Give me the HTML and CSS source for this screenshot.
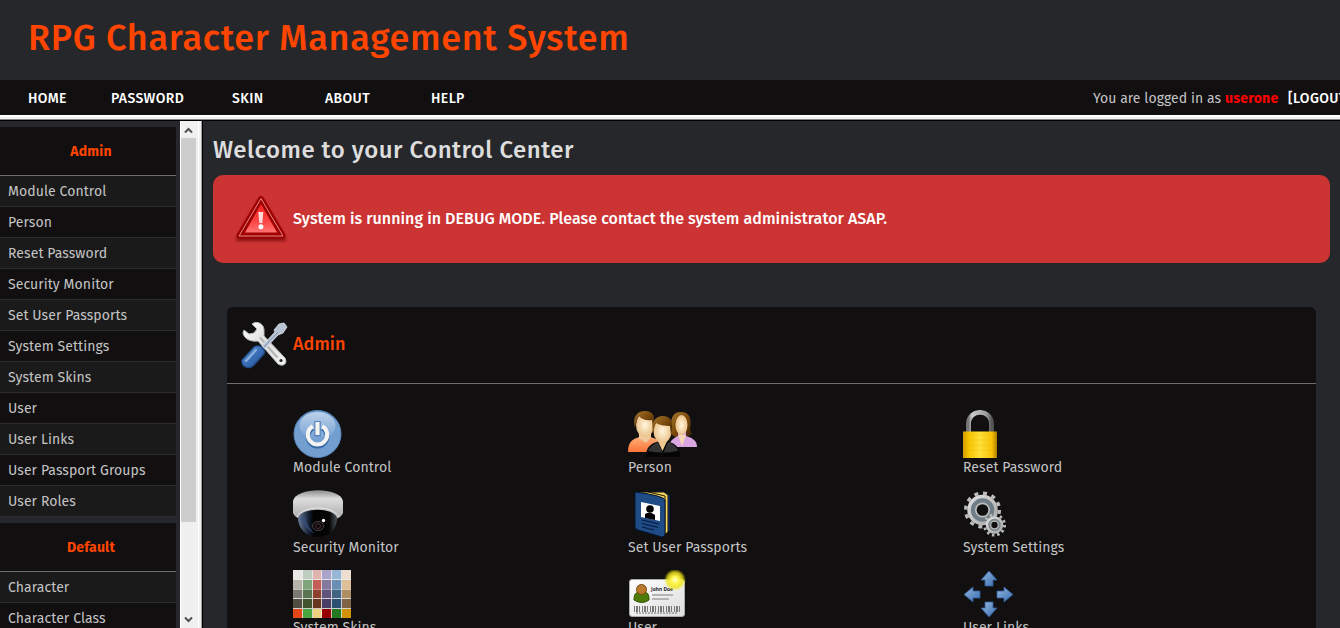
FILE: index.html
```html
<!DOCTYPE html>
<html lang="en">
<head>
<meta charset="utf-8">
<title>RPG Character Management System</title>
<link rel="stylesheet" href="styles.css">
</head>
<body>
<header class="banner"><h1>RPG Character Management System</h1></header>
<nav class="topnav">
  <a class="home">HOME</a><a class="password">PASSWORD</a><a class="skin">SKIN</a><a class="about">ABOUT</a><a class="help">HELP</a>
  <div class="login"><span class="status">You are logged in as</span><b>userone</b><a class="logout">[LOGOUT]</a></div>
</nav>
<div class="frame-bar"></div>
<div class="frames">
  <aside class="sidebar">
    <section class="menu">
      <h2>Admin</h2>
      <ul><li>Module Control</li><li>Person</li><li>Reset Password</li><li>Security Monitor</li><li>Set User Passports</li><li>System Settings</li><li>System Skins</li><li>User</li><li>User Links</li><li>User Passport Groups</li><li>User Roles</li></ul>
    </section>
    <section class="menu">
      <h2>Default</h2>
      <ul><li>Character</li><li>Character Class</li></ul>
    </section>
  </aside>
  <div class="scrollbar">
    <svg width="17" height="17" viewBox="0 0 17 17"><path d="M4 11.500 7.500 8 11 11.500" fill="none" stroke="#505050" stroke-width="2"/></svg>
    <div class="thumb"></div>
    <svg class="down" width="17" height="17" viewBox="0 0 17 17"><path d="M4 6.500 7.500 10 11 6.500" fill="none" stroke="#505050" stroke-width="2"/></svg>
  </div>
  <div class="frame-divider"></div>
  <main>
    <h2 class="welcome">Welcome to your Control Center</h2>
    <div class="alert">
      <svg width="60" height="56" viewBox="0 0 60 56">
        <defs><linearGradient id="warn" x2="0" y2="1"><stop offset="0" stop-color="#f32020"/><stop offset=".6" stop-color="#fa4545"/><stop offset="1" stop-color="#ff7373"/></linearGradient><filter id="soft" x="-20%" y="-20%" width="140%" height="150%"><feGaussianBlur stdDeviation="1.600"/></filter></defs>
        <path d="M30 9 53 48H7Z" fill="#600" stroke="#600" stroke-width="4" stroke-linejoin="round" opacity=".65" filter="url(#soft)"/>
        <path d="M30 8 51.500 44.500H8.500Z" fill="#a60000" stroke="#a00000" stroke-width="6" stroke-linejoin="round"/>
        <path d="M30 7.500 52 45H8Z" fill="none" stroke="#e08a8a" stroke-width="1" stroke-linejoin="round"/>
        <path d="M30 13 46 41.500H14Z" fill="url(#warn)"/>
        <path d="M27.300 21h5l-1 11h-3z" fill="#ffd9d9"/><circle cx="29.900" cy="35.700" r="2.500" fill="#fff"/>
      </svg>
      <p>System is running in DEBUG MODE. Please contact the system administrator ASAP.</p>
    </div>
    <section class="panel">
      <header>
        <svg width="50" height="50" viewBox="0 0 50 50">
          <defs><linearGradient id="steel" x2="1" y2="1"><stop offset="0" stop-color="#fff"/><stop offset=".5" stop-color="#dcdcdc"/><stop offset="1" stop-color="#f5f5f5"/></linearGradient><linearGradient id="handle" x2="1" y2="1"><stop offset="0" stop-color="#86ace0"/><stop offset=".45" stop-color="#3d73bc"/><stop offset="1" stop-color="#214b8f"/></linearGradient></defs>
          <path d="M12 4C17 0 24 4 24 10L24 16 45 38C48 44 43 47 38 44L18 21C11 22 4 19 3 13L4 10 9 14 14 13 17 9Z" fill="url(#steel)" stroke="#b9bbb8"/>
          <path d="M20.500 18 24 22M28 27 37 37" stroke="#b5b5b5" stroke-width="2" stroke-linecap="round"/><circle cx="41" cy="40.500" r="1.600" fill="#252525"/>
          <path d="M39 4 44 3 47 7 43 13 38 15 25 29 22 26 35 12 34 10Z" fill="#b7c3d3" stroke="#dfe4eb" stroke-width=".8"/>
          <path d="M38 12 24 27" stroke="#8396ae"/>
          <path d="M14 27C19 24 26 28 24 34L14 45C9 50 1 47 2 40Z" fill="url(#handle)" stroke="#204a87" stroke-width="1.300"/>
          <path d="M16 30 6 41" stroke="#8fb3e0" stroke-width="2" stroke-linecap="round"/>
        </svg>
        <h3>Admin</h3>
      </header>
      <div class="grid">
        <a><svg width="50" height="48" viewBox="0 0 50 48">
          <defs><linearGradient id="gloss" x2="0" y2="1"><stop offset="0" stop-color="#bcd1ea"/><stop offset="1" stop-color="#78a2d2"/></linearGradient></defs>
          <circle cx="24.500" cy="24" r="23.500" fill="#729fcf" stroke="#5b8ac2"/><ellipse cx="24.500" cy="15.500" rx="18" ry="13.500" fill="url(#gloss)"/>
          <path d="M19.800 16.800A9.700 9.700 0 1 0 29.200 16.800" transform="translate(0 1.500)" fill="none" stroke="#3465a4" stroke-width="4.200"/>
          <path d="M19.800 16.300A9.700 9.700 0 1 0 29.200 16.300" fill="none" stroke="#f3f4f2" stroke-width="4"/>
          <path d="M24.500 11v15.500" stroke="#5583bc" stroke-width="6.500"/><path d="M24.500 12v13" stroke="#f3f4f2" stroke-width="4.200"/>
        </svg><span>Module Control</span></a>
        <a><svg width="70" height="48" viewBox="0 0 70 48">
          <defs><linearGradient id="hair" x2="1" y2="1"><stop offset="0" stop-color="#a4762f"/><stop offset=".5" stop-color="#7b4a0c"/><stop offset="1" stop-color="#3a2003"/></linearGradient><radialGradient id="face"><stop offset="0" stop-color="#fff5dd"/><stop offset="1" stop-color="#ecc38b"/></radialGradient><linearGradient id="orange" x2="0" y2="1"><stop offset="0" stop-color="#ffae79"/><stop offset="1" stop-color="#fa7438"/></linearGradient></defs>
          <path d="M43 24C42 7 45 2 53 2 62 2 64 9 62 20L64 24 59 27H47Z" fill="url(#hair)"/>
          <path d="M41 37C41 31 46 28 50 26V21H58V26C64 28 69 30 69 37Z" fill="#dba7e3"/><path d="M50 25 54 36 58 25Z" fill="#f6d8b6"/><ellipse cx="53.500" cy="15" rx="6" ry="10" fill="url(#face)"/>
          <path d="M0 42C0 32 4 29 12 27H22C30 29 34 32 34 42Z" fill="url(#orange)"/><path d="M11 23V28L18 33 23 27V21Z" fill="#efcaa0"/>
          <ellipse cx="17" cy="15" rx="9" ry="12" fill="url(#face)"/><path d="M7 18C4 7 9 1 17 1 26 1 28 8 25 18L24 10C18 11 13 9 11 6 8 9 8 13 7 18Z" fill="url(#hair)"/>
          <path d="M18 47C18 37 22 34 31 31H39C48 34 52 37 52 47Z" fill="#050505"/><path d="M20 41C22 36 26 34 30 32L35 44 40 32C46 34 49 37 50 41Q34 44 20 41" fill="#333"/><path d="M29 29 34.500 41 40 29Z" fill="#f0c78f"/>
          <ellipse cx="34.500" cy="21" rx="9" ry="12" fill="url(#face)"/><path d="M25 24C23 13 26 7 34 6 44 6 46 13 43 25L42 16C36 16 31 15 28 13 26 16 26 20 25 24Z" fill="url(#hair)"/>
        </svg><span>Person</span></a>
        <a><svg width="36" height="48" viewBox="0 0 36 48">
          <defs><linearGradient id="gold"><stop offset="0" stop-color="#d19b00"/><stop offset=".18" stop-color="#f5c500"/><stop offset=".5" stop-color="#ffe13b"/><stop offset=".85" stop-color="#f6c306"/><stop offset="1" stop-color="#a97b00"/></linearGradient><linearGradient id="shackle"><stop offset="0" stop-color="#777"/><stop offset=".15" stop-color="#ccc"/><stop offset=".8" stop-color="#999"/><stop offset="1" stop-color="#555"/></linearGradient></defs>
          <path d="M5.500 23V14C5.500-1.500 28.500-1.500 28.500 14V23" fill="none" stroke="url(#shackle)" stroke-width="4.800"/><path d="M0 21.500H34V48H0Z" fill="url(#gold)"/><path d="M0 25H34M0 30H34M0 35H34M0 40H34" stroke="#e7b500" opacity=".3"/>
        </svg><span>Reset Password</span></a>
        <a><svg width="50" height="48" viewBox="0 0 50 48">
          <defs><linearGradient id="dome" x2="0" y2="1"><stop offset="0" stop-color="#8a8a8a"/><stop offset=".3" stop-color="#ddd"/><stop offset="1" stop-color="#aaa"/></linearGradient><linearGradient id="glass"><stop offset="0" stop-color="#66799b"/><stop offset=".3" stop-color="#111a2a"/><stop offset=".4" stop-color="#030303"/><stop offset=".8" stop-color="#050505"/><stop offset="1" stop-color="#465058"/></linearGradient></defs>
          <path d="M0 11C3-3.500 47-3.500 50 11V23C49 26 46 28 43 29H7C4 28 1 26 0 23Z" fill="url(#dome)"/><path d="M4 27C10 15 40 15 46 27" fill="none" stroke="#e5e5e5"/>
          <path d="M5 28C8 17 41 17 44 28 44 39 36 47 25 47S5 39 5 28Z" fill="url(#glass)"/><path d="M8 27Q10 38 22 44Q14 37 12 27" fill="#375080" opacity=".7"/>
          <ellipse cx="25" cy="36" rx="5.500" ry="4.500" fill="#080808" stroke="#444"/><circle cx="25" cy="36" r="2.500" fill="none" stroke="#542e34"/><circle cx="30.500" cy="30.500" r="1.700" fill="#fff"/>
        </svg><span>Security Monitor</span></a>
        <a><svg width="48" height="48" viewBox="0 0 48 48">
          <path d="M8 2 36 1 42 5V41L37 43Z" fill="#163e80" stroke="#030b17"/><path d="M11 2 36 2 40 5V42L36 45Z" fill="#f4d45b" stroke="#15120a"/><path d="M20 2 37 6V43M15 3 34 8V43" fill="none" stroke="#221d09"/>
          <path d="M8 2Q36 6 37 10V44Q37 47 34 47L10 40Q7 39 7 37V4Q7 2 8 2Z" fill="#1f4b87" stroke="#041631"/>
          <path d="M13 12 32 16V31L13 27Z" fill="#fff"/><circle cx="22" cy="19" r="3.800" fill="#000"/><path d="M17 28V24Q22 21 27 25V30Z" fill="#000"/>
          <path d="M14 30 31 34M14 33.500 30 37.500M14 37 26 40" stroke="#071b3b" stroke-width="1.200"/>
        </svg><span>Set User Passports</span></a>
        <a><svg width="48" height="48" viewBox="0 0 48 48">
          <defs><linearGradient id="gear" x2="1" y2="1"><stop offset="0" stop-color="#e0e0e0"/><stop offset="1" stop-color="#a6a6a6"/></linearGradient></defs>
          <circle cx="19.500" cy="20" r="13.500" fill="#6f7e86" stroke="url(#gear)" stroke-width="3.500"/><circle cx="19.500" cy="20" r="16.800" fill="none" stroke="#bbb" stroke-width="3.500" stroke-dasharray="4 4.800"/><circle cx="19.500" cy="20" r="6.700" fill="#110f10" stroke="#bdbdbd" stroke-width="1.700"/>
          <circle cx="31.500" cy="35" r="7.500" fill="#7c888d" stroke="url(#gear)" stroke-width="2.500"/><circle cx="31.500" cy="35" r="10" fill="none" stroke="#b8b8b8" stroke-width="3" stroke-dasharray="2.500 2.730"/><circle cx="31.500" cy="35" r="3.800" fill="#110f10" stroke="#bbb" stroke-width="1.300"/>
        </svg><span>System Settings</span></a>
        <a><svg width="58" height="48" viewBox="0 0 58 48" shape-rendering="crispEdges">
          <path d="M0 0h10v10H0z" fill="#e9e7e3"/><path d="M10 0h10v10H10z" fill="#bfcdc1"/><path d="M20 0h9v10h-9z" fill="#dfb3ae"/><path d="M29 0h10v10H29z" fill="#aaa3ca"/><path d="M39 0h10v10H39z" fill="#98b7d7"/><path d="M49 0h9v10h-9z" fill="#eedecf"/>
          <path d="M0 10h10v10H0z" fill="#b6b3ab"/><path d="M10 10h10v10H10z" fill="#7fa67a"/><path d="M20 10h9v10h-9z" fill="#c55d54"/><path d="M29 10h10v10H29z" fill="#85789f"/><path d="M39 10h10v10H39z" fill="#6b8fb4"/><path d="M49 10h9v10h-9z" fill="#dfbf98"/>
          <path d="M0 20h10v9H0z" fill="#7b786f"/><path d="M10 20h10v9H10z" fill="#587451"/><path d="M20 20h9v9h-9z" fill="#8d402d"/><path d="M29 20h10v9H29z" fill="#60547d"/><path d="M39 20h10v9H39z" fill="#416485"/><path d="M49 20h9v9h-9z" fill="#af8e63"/>
          <path d="M0 29h10v10H0z" fill="#504d42"/><path d="M10 29h10v10H10z" fill="#41542b"/><path d="M20 29h9v10h-9z" fill="#69351f"/><path d="M29 29h10v10H29z" fill="#483e66"/><path d="M39 29h10v10H39z" fill="#2c5072"/><path d="M49 29h9v10h-9z" fill="#806344"/>
          <path d="M0 39h10v9H0z" fill="#e34719"/><path d="M10 39h10v9H10z" fill="#49a641"/><path d="M20 39h9v9h-9z" fill="#edd17e"/><path d="M29 39h10v9H29z" fill="#960000"/><path d="M39 39h10v9H39z" fill="#237820"/><path d="M49 39h9v9h-9z" fill="#d1920a"/>
          <path d="M9.500 0v48M19.500 0v48M28.500 0v48M38.500 0v48M48.500 0v48M0 9.500h58M0 28.500h58M0 38.500h58" stroke="#eee" opacity=".8"/><path d="M0 19.500h58" stroke="#ddd" opacity=".35"/>
        </svg><span>System Skins</span></a>
        <a><svg width="58" height="48" viewBox="0 0 58 48">
          <defs><radialGradient id="glow"><stop offset="0" stop-color="#fffed0"/><stop offset=".35" stop-color="#fff448"/><stop offset=".7" stop-color="#ede31b" stop-opacity=".8"/><stop offset="1" stop-color="#f5ed00" stop-opacity="0"/></radialGradient><linearGradient id="card" x2="1" y2="1"><stop offset="0" stop-color="#fff"/><stop offset="1" stop-color="#ddd"/></linearGradient></defs>
          <rect x="1.500" y="9.500" width="55" height="37" rx="2.500" fill="url(#card)" stroke="#aaa"/><path d="M6 30C6 23 8 22 14 22S21 24 21 30Q14 35 6 30Z" fill="#4e7b09" stroke="#315400"/><circle cx="13.500" cy="19.500" r="5" fill="#ba792c" stroke="#764814"/>
          <text class="card-name" x="23" y="20.500" textLength="22" lengthAdjust="spacingAndGlyphs">John Doe</text>
          <path d="M24 25h21M24 29h17" stroke="#b4b4b4" stroke-width="1.800"/><path d="M6 39h46" stroke="#777" stroke-width="6" stroke-dasharray="1 1 2 1 1 2"/><path d="M8 43h42" stroke="#999" stroke-width="1.500" stroke-dasharray="2 1"/>
          <circle cx="47" cy="10" r="11" fill="url(#glow)"/>
        </svg><span>User</span></a>
        <a><svg width="50" height="48" viewBox="0 0 50 48">
          <defs><linearGradient id="arrow" x2="1" y2="1"><stop offset="0" stop-color="#95b8e0"/><stop offset="1" stop-color="#386caf"/></linearGradient></defs>
          <g fill="url(#arrow)" stroke="#315d99" stroke-width=".8"><path d="M26 1 34 10H30V16H22V10H18Z"/><path d="M26 47 34 38H30V32H22V38H18Z"/><path d="M1 24.500 10 17V21H17V28H10V32Z"/><path d="M50 24.500 41 17V21H34V28H41V32Z"/></g>
        </svg><span>User Links</span></a>
      </div>
    </section>
  </main>
</div>
</body>
</html>
```
FILE: styles.css
```css
* { box-sizing: border-box; }
body { margin: 0; height: 628px; overflow: hidden; background: #26272b; color: #c4c4c4; font: 400 14px/20px "Fira Sans", "Noto Sans", sans-serif; letter-spacing: .08px; }
h1, h2, h3, p, ul { margin: 0; padding: 0; }
.banner { height: 80px; padding: 13px 28px; }
.banner h1 { color: #ff4500; font-size: 36px; line-height: 50px; font-weight: 500; letter-spacing: .7px; white-space: nowrap; }
.topnav { height: 35px; display: flex; align-items: center; padding: 2px 0 0 28px; background: #110f10; white-space: nowrap; overflow: hidden; }
.topnav a { color: #fff; font-weight: 500; letter-spacing: .4px; flex: none; }
.home { width: 83px; }
.password { width: 121px; }
.skin { width: 93px; }
.about { width: 106px; }
.help { width: 60px; }
.login { display: flex; flex: none; margin-left: 602px; }
.login .status { width: 132px; letter-spacing: .06px; }
.login b { color: red; width: 63px; letter-spacing: .25px; }
.frame-bar { height: 6px; background: linear-gradient(#fff 0 2px, #f0f0f0 2px 4px, #888 4px 5px, #000 5px); }
.frames { display: flex; height: 507px; overflow: hidden; }
.sidebar { width: 180px; flex: none; padding: 6px 4px 0 0; overflow: hidden; }
.menu { margin-bottom: 6px; background: #110f10; }
.menu h2 { height: 49px; border-bottom: 1px solid #706f70; color: #ff4500; text-align: center; padding: 1px 0 0 6px; font-size: 14px; line-height: 48px; letter-spacing: .2px; }
.menu ul { list-style: none; }
.menu li { height: 31px; padding: 1px 0 0 8px; line-height: 30px; border-bottom: 1px solid #2b2b2d; }
.menu li:nth-child(odd) { background: #1a1a1a; }
.scrollbar { width: 17px; flex: none; background: #f0f0f0; border-left: 1px solid #fff; display: flex; flex-direction: column; }
.scrollbar svg { display: block; flex: none; }
.thumb { height: 384px; width: 15px; background: #cdcdcd; }
.scrollbar .down { margin-top: auto; }
.frame-divider { width: 6px; flex: none; background: linear-gradient(90deg, #f0f0f0 0 1px, #fff 1px 2px, #f0f0f0 2px 4px, #a0a0a0 4px 5px, #000 5px); }
main { flex: 1; padding: 13px 10px 0; overflow: hidden; }
.welcome { height: 41px; color: #ddd; font-size: 24px; line-height: 33px; font-weight: 500; letter-spacing: .5px; white-space: nowrap; }
.alert { height: 88px; display: flex; align-items: center; padding-left: 18px; border-radius: 10px; background: #c33; color: #fff; }
.alert p { margin-left: 2px; padding-bottom: 1px; font-size: 16px; font-weight: 500; letter-spacing: .055px; white-space: nowrap; }
.panel { margin: 44px 14px 0; border-radius: 6px 6px 0 0; background: #110f10; }
.panel header { height: 77px; border-bottom: 1px solid #706f70; display: flex; align-items: center; padding-left: 13px; gap: 3px; }
.panel h3 { color: #ff4500; font-size: 18px; font-weight: 500; line-height: 24px; padding-bottom: 3px; }
.grid { display: grid; grid-template-columns: repeat(3, 335px); grid-auto-rows: 80px; padding: 26px 0 0 66px; }
.grid a { display: flex; flex-direction: column; }
.grid svg { flex: none; }
.grid span { height: 19px; line-height: 20px; }
.card-name { font: 700 6px "Noto Sans", sans-serif; fill: #222; }
```
